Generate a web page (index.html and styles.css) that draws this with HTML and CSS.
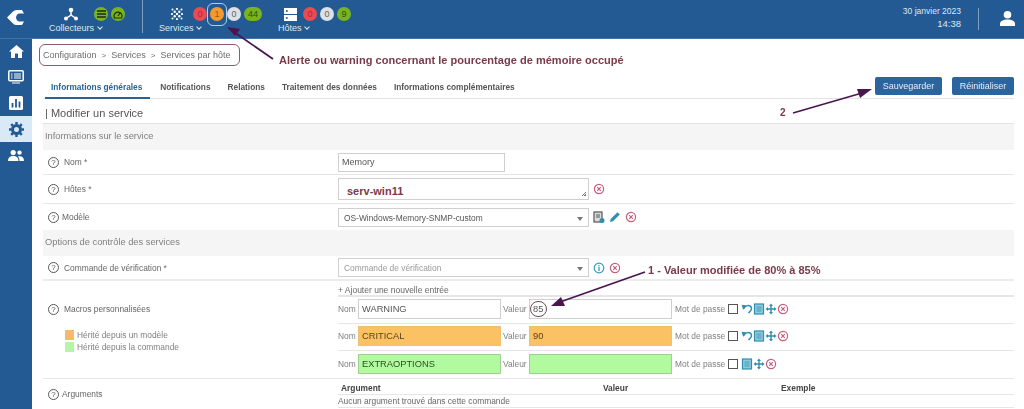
FILE: index.html
```html
<!DOCTYPE html>
<html lang="fr">
<head>
<meta charset="utf-8">
<title>Modifier un service</title>
<link rel="stylesheet" href="styles.css">
</head>
<body>
<svg class="defs" width="0" height="0" aria-hidden="true">
  <defs>
    <symbol id="x" viewBox="0 0 12 12"><circle cx="6" cy="6" r="4.6" fill="none" stroke="#c4607c" stroke-width="1.2"/><path d="M4.2 4.2l3.6 3.6M7.8 4.2l-3.6 3.6" stroke="#c4607c" stroke-width="1.2"/></symbol>
    <symbol id="undo" viewBox="0 0 12 12"><path d="M3 5.5C4 2 9.5 1.5 10.5 5c.5 2.400-1.500 3.500-3 5" fill="none" stroke="#2f8fb0" stroke-width="1.500"/><path d="M.6 1.800L5 2.300 2.200 7z" fill="#2f8fb0"/></symbol>
    <symbol id="doc" viewBox="0 0 12 12"><rect x="1.500" y="1" width="9" height="10" fill="#8fcbdc" stroke="#2f8fb0" stroke-width="1.200"/><path d="M3.500 4h5M3.500 6h5M3.500 8h5" stroke="#2f8fb0" stroke-width=".8"/></symbol>
    <symbol id="move" viewBox="0 0 12 12"><path d="M6 .5L8 3H6.700v2.300H9V4l2.500 2L9 8V6.700H6.700V9H8l-2 2.500L4 9h1.300V6.700H3V8L.5 6 3 4v1.300h2.300V3H4z" fill="#2f8fb0"/></symbol>
  </defs>
</svg>

<header class="topbar">
  <div class="brand">
    <svg width="17" height="15" viewBox="0 0 17 15"><path d="M0 7.500L6 1.500Q7.500 0 9.500 0H15L17 3.500H12Q9.500 4 9 7.500Q9.500 11 12 11.500H17L15 15H9.500Q7.500 15 6 13.500z" fill="#fff"/></svg>
  </div>
  <nav class="group group-poll">
    <div class="status">
      <svg class="nav-icon poll" width="14" height="14" viewBox="0 0 14 14"><circle cx="7" cy="3" r="2.300" fill="#fff"/><circle cx="2" cy="11.500" r="2" fill="#fff"/><circle cx="12" cy="11.500" r="2" fill="#fff"/><path d="M7 3v5L2 11.500M7 8l5 3.500" stroke="#fff" stroke-width="1.500" fill="none"/></svg>
      <span class="pill green"><svg width="9" height="8" viewBox="0 0 9 8"><path d="M0 1h9M0 4h9M0 7h9" stroke="#1d2b10" stroke-width="1.600"/></svg></span>
      <span class="pill green"><svg width="10" height="9" viewBox="0 0 10 9"><path d="M1.500 8A4 4 0 1 1 8.500 8z" fill="none" stroke="#1d2b10" stroke-width="1.200"/><path d="M5 6l2-3" stroke="#1d2b10" stroke-width="1.200"/></svg></span>
    </div>
    <div class="nav-label">Collecteurs <span class="chev"></span></div>
  </nav>
  <nav class="group group-svc">
    <div class="status">
      <svg class="nav-icon svc" width="12" height="12" viewBox="0 0 12 12" fill="#fff"><circle cx="1.500" cy="1.500" r="1"/><circle cx="6" cy="1" r="1.100"/><circle cx="10.500" cy="1.500" r="1"/><circle cx="3.700" cy="3.700" r="1.200"/><circle cx="8.300" cy="3.700" r="1.200"/><circle cx="1" cy="6" r="1.100"/><circle cx="6" cy="6" r="1.200"/><circle cx="11" cy="6" r="1.100"/><circle cx="3.700" cy="8.300" r="1.200"/><circle cx="8.300" cy="8.300" r="1.200"/><circle cx="1.500" cy="10.500" r="1"/><circle cx="6" cy="11" r="1.100"/><circle cx="10.500" cy="10.500" r="1"/></svg>
      <span class="pill red">0</span>
      <span class="pill orange">1</span>
      <span class="pill grey">0</span>
      <span class="pill green wide">44</span>
    </div>
    <div class="nav-label">Services <span class="chev"></span></div>
    <span class="focus-ring"></span>
  </nav>
  <nav class="group group-host">
    <div class="status">
      <svg class="nav-icon host" width="13" height="13" viewBox="0 0 13 13"><rect x="0" y="0" width="13" height="6" fill="#fff"/><rect x="0" y="7" width="13" height="6" fill="#fff"/><circle cx="2.800" cy="3" r="1" fill="#235a94"/><circle cx="2.800" cy="10" r="1" fill="#235a94"/></svg>
      <span class="pill red">0</span>
      <span class="pill grey">0</span>
      <span class="pill green">9</span>
    </div>
    <div class="nav-label">Hôtes <span class="chev"></span></div>
  </nav>
  <div class="clock">
    <div class="date">30 janvier 2023</div>
    <div class="time">14:38</div>
  </div>
  <div class="account">
    <svg width="15" height="15" viewBox="0 0 15 15" fill="#fff"><circle cx="7.500" cy="3.800" r="3.800"/><path d="M0 15v-2c0-3 3-4.500 7.500-4.500S15 10 15 13v2z"/></svg>
  </div>
</header>

<div class="shell">
  <aside class="sidebar">
    <a class="side-item"><svg width="15" height="13" viewBox="0 0 15 13" fill="#fff"><path d="M7.500 0L15 6.500h-2V13H9V8.500H6V13H2V6.500H0z"/></svg></a>
    <a class="side-item"><svg width="16" height="14" viewBox="0 0 16 14"><rect x=".8" y=".8" width="14.400" height="10" rx="1" fill="none" stroke="#fff" stroke-width="1.500"/><path d="M3 4h1.500M6 4h7M3 6h1.500M6 6h7M3 8h1.500M6 8h7M4 13h8" stroke="#fff" stroke-width="1.200"/></svg></a>
    <a class="side-item"><svg width="14" height="14" viewBox="0 0 14 14"><rect width="14" height="14" rx="1.500" fill="#fff"/><path d="M3.500 7v4.500M7 3v8.500M10.500 5.500v6" stroke="#235a94" stroke-width="1.800"/></svg></a>
    <a class="side-item active"><svg width="15" height="15" viewBox="0 0 15 15"><circle cx="7.500" cy="7.500" r="4" fill="none" stroke="#235a94" stroke-width="3"/><path d="M7.500 0v15M0 7.500h15M2.200 2.200l10.600 10.600M12.800 2.200L2.200 12.800" stroke="#235a94" stroke-width="2.400" stroke-dasharray="2.400 10.200 2.400"/></svg></a>
    <a class="side-item"><svg width="16" height="11" viewBox="0 0 16 11" fill="#fff"><circle cx="5.200" cy="2.600" r="2.600"/><circle cx="11.500" cy="2.600" r="2.200"/><path d="M0 11c0-3.500 2-5 5.200-5s5.300 1.500 5.300 5z"/><path d="M11.500 11h4.500c0-3-1.500-4.800-4.500-4.800-.7 0-1.300.1-1.800.3 1.200 1 1.800 2.500 1.800 4.500z"/></svg></a>
  </aside>

  <main class="content">
    <div class="breadcrumb">
      <span>Configuration</span><span class="sep">&gt;</span><span>Services</span><span class="sep">&gt;</span><span>Services par hôte</span>
    </div>

    <div class="tabbar">
      <ul class="tabs">
        <li class="tab current">Informations générales</li>
        <li class="tab">Notifications</li>
        <li class="tab">Relations</li>
        <li class="tab">Traitement des données</li>
        <li class="tab">Informations complémentaires</li>
      </ul>
      <div class="actions">
        <button class="btn">Sauvegarder</button>
        <button class="btn">Réinitialiser</button>
      </div>
    </div>

    <h1 class="page-title">| Modifier un service</h1>

    <section class="form">
      <div class="section-head">Informations sur le service</div>

      <div class="row row-name">
        <div class="label"><span class="help">?</span>Nom *</div>
        <div class="value"><input class="field field-name" value="Memory"></div>
      </div>
      <div class="row row-hosts">
        <div class="label"><span class="help">?</span>Hôtes *</div>
        <div class="value">
          <div class="field field-wide tags"><strong class="note tag-text">serv-win11</strong><span class="grip"></span></div>
          <svg class="ico"><use href="#x"/></svg>
        </div>
      </div>
      <div class="row row-model">
        <div class="label tight"><span class="help">?</span>Modèle</div>
        <div class="value">
          <div class="field field-wide select">OS-Windows-Memory-SNMP-custom<span class="caret"></span></div>
          <svg class="ico" viewBox="0 0 12 12"><rect x="1" y="1" width="8" height="10" fill="#ddd" stroke="#555" stroke-width="1.200"/><path d="M3 4h4M3 6h4" stroke="#555"/><circle cx="9" cy="9.500" r="2.500" fill="#2f8fb0"/></svg>
          <svg class="ico" viewBox="0 0 12 12"><path d="M1 11l.7-3L8.500 1.200l2.300 2.300L4 10.300z" fill="#2f8fb0"/></svg>
          <svg class="ico"><use href="#x"/></svg>
        </div>
      </div>

      <div class="section-head">Options de contrôle des services</div>

      <div class="row row-command">
        <div class="label"><span class="help">?</span>Commande de vérification *</div>
        <div class="value">
          <div class="field field-wide select placeholder">Commande de vérification<span class="caret"></span></div>
          <svg class="ico" viewBox="0 0 12 12"><circle cx="6" cy="6" r="4.800" fill="none" stroke="#2f9fc0" stroke-width="1.200"/><path d="M6 5v4M6 3v1.200" stroke="#2f9fc0" stroke-width="1.300"/></svg>
          <svg class="ico"><use href="#x"/></svg>
        </div>
      </div>

      <div class="row row-macros">
        <div class="label macro-label">
          <div><span class="help">?</span>Macros personnalisées</div>
          <ul class="legend">
            <li><span class="swatch swatch-tpl"></span>Hérité depuis un modèle</li>
            <li><span class="swatch swatch-cmd"></span>Hérité depuis la commande</li>
          </ul>
        </div>
        <div class="macros">
          <div class="add-entry">+ Ajouter une nouvelle entrée</div>
          <div class="macro">
            <label class="m-label">Nom</label><input class="field m-input" value="WARNING">
            <label class="m-label m-val">Valeur</label><input class="field m-input m-input-val" value="85">
            <label class="m-label m-pass">Mot de passe</label><span class="check"></span>
            <svg class="mini"><use href="#undo"/></svg><svg class="mini"><use href="#doc"/></svg><svg class="mini"><use href="#move"/></svg><svg class="mini"><use href="#x"/></svg>
          </div>
          <div class="macro">
            <label class="m-label">Nom</label><input class="field m-input tpl" value="CRITICAL">
            <label class="m-label m-val">Valeur</label><input class="field m-input m-input-val tpl" value="90">
            <label class="m-label m-pass">Mot de passe</label><span class="check"></span>
            <svg class="mini"><use href="#undo"/></svg><svg class="mini"><use href="#doc"/></svg><svg class="mini"><use href="#move"/></svg><svg class="mini"><use href="#x"/></svg>
          </div>
          <div class="macro">
            <label class="m-label">Nom</label><input class="field m-input cmd" value="EXTRAOPTIONS">
            <label class="m-label m-val">Valeur</label><input class="field m-input m-input-val cmd" value="">
            <label class="m-label m-pass">Mot de passe</label><span class="check"></span>
            <svg class="mini"><use href="#doc"/></svg><svg class="mini"><use href="#move"/></svg><svg class="mini"><use href="#x"/></svg>
          </div>
        </div>
      </div>

      <div class="row row-args">
        <div class="label tight args-label"><span class="help">?</span>Arguments</div>
        <div class="args">
          <div class="args-head"><span class="a1">Argument</span><span class="a2">Valeur</span><span>Exemple</span></div>
          <div class="args-empty">Aucun argument trouvé dans cette commande</div>
        </div>
      </div>
    </section>
  </main>
</div>

<!-- Screenshot annotations laid over the page -->
<span class="bc-ring"></span>
<span class="val-ring"></span>
<strong class="note note-alert">Alerte ou warning concernant le pourcentage de mémoire occupé</strong>
<strong class="note note-two">2</strong>
<strong class="note note-one">1 - Valeur modifiée de 80% à 85%</strong>
<svg class="arrows" width="1024" height="409" viewBox="0 0 1024 409">
  <g stroke="#4a1650" stroke-width="1.800" fill="#4a1650">
    <path d="M273 59L234 32" fill="none"/><path d="M227 27l13 2-5 7z" stroke="none"/>
    <path d="M793 113L862 93" fill="none"/><path d="M872 89l-12 9-3-9z" stroke="none"/>
    <path d="M645 272L560 302" fill="none"/><path d="M551 306l10-9 4 9z" stroke="none"/>
  </g>
</svg>
</body>
</html>
```

FILE: styles.css
```css
* { box-sizing: border-box; }
html, body { margin: 0; padding: 0; }
body {
  width: 1024px;
  height: 409px;
  overflow: hidden;
  position: relative;
  background: #fff;
  color: #666;
  font-family: "Liberation Sans", Arial, sans-serif;
  font-size: 9px;
  filter: blur(0.3px);
}
ul { list-style: none; margin: 0; padding: 0; }
.defs { position: absolute; }

/* top bar */
.topbar {
  height: 39px;
  background: #235a94;
  border-bottom: 1px solid #3f74a8;
  display: flex;
  align-items: flex-start;
  color: #dfe8f2;
}
.brand { width: 49px; padding: 10px 0 0 7px; }
.group { position: relative; padding-top: 7px; }
.group-poll { width: 94px; height: 33px; border-right: 1px solid #7f9fc0; }
.group-svc { width: 119px; margin-left: 16px; }
.status { display: flex; align-items: center; height: 14px; gap: 3px; }
.nav-icon { flex: none; }
.poll { margin: 0 13px 0 15px; }
.svc { margin: 0 7px 0 12px; }
.host { margin: 0 3px 0 6px; }
.pill {
  display: flex;
  align-items: center;
  justify-content: center;
  width: 14px;
  height: 14px;
  border-radius: 7px;
  font-size: 9px;
  line-height: 14px;
}
.pill.wide { width: 18px; }
.red { background: #ea4a52; color: #a82a30; }
.orange { background: #f6992d; color: #9a5a10; }
.grey { background: #dde0e4; color: #666; }
.green { background: #79b41f; color: #2f4f10; }
.nav-label { margin-top: 1px; line-height: 12px; font-size: 9px; white-space: nowrap; }
.chev {
  display: inline-block;
  width: 4px;
  height: 4px;
  margin: 0 0 2px 1px;
  border-right: 1px solid #dfe8f2;
  border-bottom: 1px solid #dfe8f2;
  transform: rotate(45deg);
}
.focus-ring {
  position: absolute;
  left: 48px;
  top: 3px;
  width: 20px;
  height: 23px;
  border: 1px solid #a8d4ee;
  border-radius: 6px;
}
.clock { margin-left: auto; padding-top: 6px; text-align: right; width: 60px; white-space: nowrap; }
.date { font-size: 8.500px; line-height: 11px; display: flex; justify-content: flex-end; }
.time { font-size: 9.500px; line-height: 14px; }
.account {
  margin: 8px 0 0 17px;
  width: 46px;
  height: 22px;
  padding: 3px 0 0 21px;
  border-left: 1px solid #7f9fc0;
}

/* shell */
.shell { display: flex; height: 370px; }
.sidebar { width: 32px; flex: none; background: #235a94; }
.side-item {
  display: flex;
  align-items: center;
  justify-content: center;
  height: 26px;
}
.side-item:first-child { margin-top: -1px; }
.side-item.active { background: #d9e9f7; }
.content { width: 992px; padding: 5px 10px 0 11px; }

/* breadcrumb */
.breadcrumb {
  height: 22px;
  margin-left: -4px;
  padding-left: 4px;
  display: flex;
  align-items: center;
  font-size: 9px;
  color: #6d6d6d;
}
.sep { margin: 0 5px; font-size: 8px; }
.bc-ring {
  position: absolute;
  left: 39px;
  top: 44px;
  width: 201px;
  height: 22px;
  border: 1px solid #8c5c68;
  border-radius: 6px;
}

/* tabs */
.tabbar {
  height: 23px;
  margin-top: 10px;
  display: flex;
  justify-content: space-between;
  align-items: flex-start;
  border-bottom: 1px solid #e3e3e3;
}
.tabs { display: flex; padding-left: 2px; }
.tab {
  height: 23px;
  line-height: 20px;
  padding: 1px 0 0 6px;
  margin-right: 11px;
  font-size: 8.300px;
  font-weight: bold;
  color: #555;
  white-space: nowrap;
}
.tab.current { color: #2a6396; border-bottom: 2px solid #2a6396; padding-right: 8px; margin-right: 4px; }
.actions { display: flex; gap: 10px; margin-top: 1px; }
.btn {
  height: 18px;
  width: 67px;
  padding: 0;
  border: 0;
  border-radius: 2px;
  background: #2a659f;
  color: #e6eef6;
  font: 9px "Liberation Sans", Arial, sans-serif;
}
.btn + .btn { width: 62px; }

.page-title {
  margin: 0;
  height: 25px;
  padding-left: 2px;
  line-height: 29px;
  font-size: 11px;
  font-weight: normal;
  color: #555;
  border-bottom: 1px solid #e3e3e3;
}

/* form */
.section-head {
  height: 26px;
  line-height: 25px;
  padding-left: 2px;
  background: #f5f5f5;
  font-size: 9.300px;
  color: #808080;
}
.row { display: grid; grid-template-columns: 295px 1fr; border-bottom: 1px solid #e6e6e6; }
.row-name { height: 25px; }
.row-hosts { height: 29px; }
.row-model { height: 26px; border-bottom: 0; }
.row-command { height: 25px; border-bottom: 2px solid #ececec; }
.row-macros { height: 98px; border-bottom: 1px solid #e6e6e6; }
.row-args { height: 40px; border-bottom: 0; }
.label { display: flex; align-items: center; padding-left: 5px; color: #666; font-size: 8.400px; }
.help {
  flex: none;
  display: inline-block;
  width: 11px;
  height: 11px;
  margin-right: 5px;
  border: 1px solid #555;
  border-radius: 50%;
  text-align: center;
  font-size: 8px;
  line-height: 9px;
  color: #555;
  vertical-align: middle;
}
.tight .help { margin-right: 3px; }
.value { display: flex; align-items: center; gap: 4px; }
.field {
  display: block;
  height: 19px;
  padding: 0 3px;
  border: 1px solid #cfcfcf;
  border-radius: 0;
  outline: 0;
  background: #fff;
  color: #555;
  font: 9px "Liberation Sans", Arial, sans-serif;
}
.field-name { width: 167px; }
.field-wide { width: 251px; }
.tags { position: relative; height: 22px; padding-left: 8px; line-height: 25px; }
.tag-text { font-size: 11px; }
.grip {
  position: absolute;
  right: 2px;
  bottom: 3px;
  width: 5px;
  height: 5px;
  background: linear-gradient(135deg, transparent 55%, #777 55%, #777 65%, transparent 65%, transparent 80%, #777 80%);
}
.select { position: relative; line-height: 18px; padding-left: 5px; font-size: 8.400px; }
.placeholder { color: #999; }
.caret {
  position: absolute;
  right: 5px;
  top: 8px;
  border: 3px solid transparent;
  border-top: 4px solid #777;
  border-bottom: 0;
}
.ico { width: 12px; height: 12px; flex: none; }

/* macros */
.macro-label { display: block; padding-top: 22px; line-height: 12px; }
.legend { margin: 14px 0 0 17px; color: #808080; }
.legend li { display: flex; align-items: center; height: 11.500px; }
.swatch { width: 9px; height: 10px; margin-right: 3px; }
.swatch-tpl { background: #fbb867; }
.swatch-cmd { background: #b5f5a6; }
.macros { display: flex; flex-direction: column; }
.add-entry {
  height: 16px;
  line-height: 18px;
  border-bottom: 2px solid #e6e6e6;
  font-size: 8.500px;
  color: #666;
}
.macro {
  height: 27px;
  padding-bottom: 2px;
  display: flex;
  align-items: center;
  border-bottom: 1px solid #e6e6e6;
}
.macro:last-child { border-bottom: 0; }
.m-label { flex: none; width: 20px; color: #808080; font-size: 8.400px; white-space: nowrap; }
.m-val { width: 26px; margin-left: 2px; }
.m-pass { width: 53px; margin-left: 3px; }
.m-input { flex: none; width: 143px; height: 20px; font-size: 9.300px; padding-left: 3px; }
.m-input-val { width: 143px; }
.tpl { background: #fbc263; border-color: #f0c070; color: #5a4020; }
.cmd { background: #b1fa9f; border-color: #9fd08f; color: #2a5020; }
.check { flex: none; width: 10px; height: 10px; border: 1px solid #555; margin-right: 3px; }
.mini { width: 12px; height: 12px; flex: none; }
.val-ring {
  position: absolute;
  left: 530px;
  top: 301px;
  width: 17px;
  height: 16px;
  border: 1px solid #6a4a55;
  border-radius: 8px;
}

/* arguments */
.args-label { align-items: flex-start; padding-top: 10px; }
.args { font-size: 8.400px; }
.args-head {
  display: flex;
  height: 16px;
  line-height: 18px;
  padding-left: 3px;
  border-bottom: 1px solid #e6e6e6;
  font-weight: bold;
  color: #444;
}
.a1 { width: 262px; }
.a2 { width: 178px; }
.args-empty { height: 13px; line-height: 13px; border-bottom: 1px solid #e6e6e6; color: #666; }

/* annotations */
.note { color: #7a3a4a; font-weight: bold; }
.note-alert, .note-two, .note-one { position: absolute; white-space: nowrap; }
.note-alert { left: 279px; top: 54px; font-size: 11px; letter-spacing: .03px; }
.note-two { left: 780px; top: 107px; font-size: 10px; }
.note-one { left: 648px; top: 264px; font-size: 11px; }
.arrows { position: absolute; left: 0; top: 0; pointer-events: none; }
```
